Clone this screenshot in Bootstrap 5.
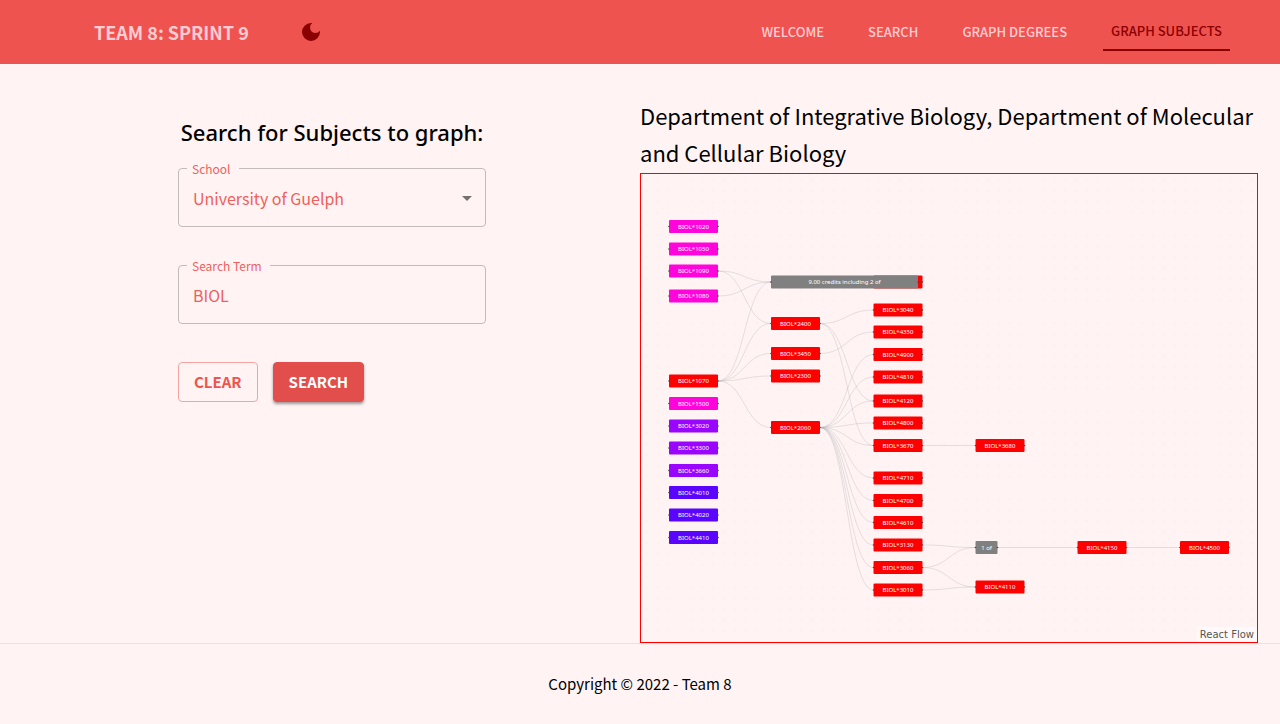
<!DOCTYPE html>
<html lang="en">
<head>
<meta charset="utf-8">
<meta name="viewport" content="width=device-width, initial-scale=1">
<title>Graph Subjects</title>
<link href="https://cdn.jsdelivr.net/npm/bootstrap@5.3.0/dist/css/bootstrap.min.css" rel="stylesheet">
<style>
  :root { --page: #fff4f3; --brand: #ef5350; --soft: #ffcdd2; --deep: #8b0000; }
  body { background: var(--page); color: #000; font-family: "Noto Sans CJK SC", "Noto Sans", sans-serif; }
  .top-bar { background: var(--brand); height: 64px; padding: 0 50px 0 94px; }
  .brand-name { color: var(--soft); font-size: 18px; line-height: 30px; font-weight: 700; }
  .theme-btn { width: 40px; height: 40px; color: var(--deep); margin-left: 42px; }
  .nav-list { gap: 28px; }
  .nav-item-link { color: var(--soft); font-size: 13px; line-height: 24px; font-weight: 500; padding: 6px 8px; }
  .nav-item-link.active { color: var(--deep); border-bottom: 2px solid var(--deep); }
  .search-form { width: 308px; padding-top: 50px; margin-left: 178px; }
  .form-title { font-family: "Noto Sans", sans-serif; font-size: 22px; line-height: 36px; font-weight: 500; margin-bottom: 18px; }
  .field { border: 1px solid #c4bbbb; border-radius: 4px; height: 59px; margin-bottom: 38px; }
  .field label { top: -10px; left: 8px; padding: 0 8px 0 5px; font-size: 12px; line-height: 20px; color: #ef5f5d; background: var(--page); }
  .field select, .field input { border: 0; outline: 0; background: transparent; appearance: none; color: #ef5f5d; font-size: 16px; padding: 0 14px; }
  .arrow { right: 6px; top: 17px; color: #757070; pointer-events: none; }
  .act-row { gap: 15px; }
  .act-btn { height: 40px; padding: 0 15px; font-size: 15px; line-height: 24px; font-weight: 700; border-radius: 4px; }
  .act-clear { border: 1px solid #f7a3a1; color: var(--brand); background: transparent; }
  .act-search { border: 1px solid #e24e4b; color: #fff; background: #e24e4b; box-shadow: 0 2px 3px rgba(0,0,0,.38); }
  .graph-side { padding-top: 33px; padding-right: 22px; }
  .graph-title { font-size: 22px; line-height: 37px; font-weight: 400; margin-bottom: 2px; }
  .flow-box { border: 1px solid #f00; }
  .flow-box text { font: 400 6px "Noto Sans", sans-serif; fill: #fff; text-anchor: middle; }
  .flow-credit { right: 0; bottom: 0; padding: 1px 3px; font: 10px/13px "DejaVu Sans", sans-serif; color: #555; background: rgba(255,255,255,.5); }
  .page-foot { border-top: 1px solid #eae3e3; font-size: 15px; line-height: 24px; padding: 28px 0; }
</style>
</head>
<body>
<header class="top-bar d-flex align-items-center">
  <a href="#" class="brand-name text-decoration-none">TEAM 8: SPRINT 9</a>
  <button type="button" class="theme-btn btn border-0 p-0 d-flex align-items-center justify-content-center" aria-label="Dark mode">
    <svg width="24" height="24" viewBox="0 0 24 24" fill="currentColor"><path d="M12 3a9 9 0 1 0 9 9c0-.46-.04-.92-.1-1.36a5.389 5.389 0 0 1-4.4 2.26 5.403 5.403 0 0 1-3.14-9.8c-.44-.06-.9-.1-1.36-.1z"/></svg>
  </button>
  <nav class="ms-auto d-flex">
    <ul class="nav-list list-unstyled d-flex align-items-center mb-0">
      <li><a href="#" class="nav-item-link d-block text-decoration-none">WELCOME</a></li>
      <li><a href="#" class="nav-item-link d-block text-decoration-none">SEARCH</a></li>
      <li><a href="#" class="nav-item-link d-block text-decoration-none">GRAPH DEGREES</a></li>
      <li><a href="#" class="nav-item-link active d-block text-decoration-none" aria-current="page">GRAPH SUBJECTS</a></li>
    </ul>
  </nav>
</header>
<main class="row g-0">
  <section class="col-6">
    <form class="search-form">
      <h1 class="form-title text-center text-nowrap">Search for Subjects to graph:</h1>
      <div class="field position-relative">
        <label class="position-absolute" for="school">School</label>
        <select id="school" class="w-100 h-100"><option>University of Guelph</option></select>
        <svg class="arrow position-absolute" width="24" height="24" viewBox="0 0 24 24" fill="currentColor"><path d="M7 10l5 5 5-5z"/></svg>
      </div>
      <div class="field position-relative">
        <label class="position-absolute" for="term">Search Term</label>
        <input id="term" type="text" class="w-100 h-100" value="BIOL">
      </div>
      <div class="act-row d-flex">
        <button type="button" class="act-btn act-clear">CLEAR</button>
        <button type="button" class="act-btn act-search">SEARCH</button>
      </div>
    </form>
  </section>
  <section class="graph-side col-6">
    <h2 class="graph-title">Department of Integrative Biology, Department of Molecular and Cellular Biology</h2>
    <div class="flow-box position-relative">
      <svg id="flow" class="d-block w-100" viewBox="0 0 616 468" role="img" aria-label="Subject graph">
        <defs><pattern id="dots" width="11" height="11" patternUnits="userSpaceOnUse"><circle cx="6" cy="6" r=".4" fill="#d9cccc"/></pattern></defs>
        <rect width="616" height="468" fill="url(#dots)"/>
      </svg>
      <a href="#" class="flow-credit position-absolute text-decoration-none">React Flow</a>
    </div>
  </section>
</main>
<footer class="page-foot text-center">Copyright © 2022 - Team 8</footer>
<script src="https://cdn.jsdelivr.net/npm/bootstrap@5.3.0/dist/js/bootstrap.bundle.min.js"></script>
<script>
  const pink = '#ff05dc', violet = '#9905ff', blue = '#5a05ff', red = '#ff0000', grey = '#808080';
  // id: [left, centre, colour, width, label]
  const nodes = {};
  const column = (x, list) => list.forEach(([id, y, c = red]) => nodes[id] = { x, y, c, w: 49, t: 'BIOL*' + id });
  column(28, [[1020,52.5,pink],[1050,75,pink],[1090,97,pink],[1080,122,pink],[1070,207],[1500,229.5,pink],
    [3020,252,violet],[3300,274,violet],[3660,296.5,violet],[4010,318.5,blue],[4020,341,blue],[4410,363.5,blue]]);
  column(130, [[2400,149.5],[3450,179.5],[2300,202],[2060,253.5]]);
  column(232.5, [[3040,136],[4350,158],[4900,180.5],[4810,203],[4120,227],[4800,249],[3670,271.5],[4710,304],
    [4700,326.5],[4610,348.5],[3130,371],[3060,393.5],[3010,416]]);
  column(334.5, [[3680,271.5],[4110,413]]);
  column(436.5, [[4150,373.5]]);
  column(539, [[4500,373.5]]);
  nodes.under = { x: 232.5, y: 108, c: red, w: 49, t: '' };
  nodes.credits = { x: 130, y: 108, c: grey, w: 147, t: '9.00 credits including 2 of' };
  nodes.oneOf = { x: 334.5, y: 373.5, c: grey, w: 22, t: '1 of' };
  const edges = [[1090,'credits'],[1090,2400],[1080,'credits'],[1070,'credits'],[1070,2400],[1070,3450],[1070,2300],[1070,2060],
    [2400,3040],[2400,4120],[2400,3670],[3450,4350],[2060,4900],[2060,4810],[2060,4120],[2060,4800],[2060,3670],[2060,4710],
    [2060,4700],[2060,4610],[2060,3130],[2060,3060],[2060,3010],[3670,3680],[3130,'oneOf'],[3060,'oneOf'],[3060,4110],
    [3010,4110],['oneOf',4150],[4150,4500]];
  const flow = document.getElementById('flow');
  const add = (tag, attrs, text) => {
    const el = document.createElementNS('http://www.w3.org/2000/svg', tag);
    for (const k in attrs) el.setAttribute(k, attrs[k]);
    if (text) el.textContent = text;
    flow.appendChild(el);
  };
  for (const [from, to] of edges) {
    const a = nodes[from], b = nodes[to], x1 = a.x + a.w, mid = (x1 + b.x) / 2;
    add('path', { d: `M${x1} ${a.y}C${mid} ${a.y} ${mid} ${b.y} ${b.x} ${b.y}`, fill: 'none', stroke: '#b1b1b7', 'stroke-width': .35 });
  }
  const order = ['under', ...Object.keys(nodes).filter(k => k !== 'under')];
  for (const key of order) {
    const n = nodes[key];
    add('rect', { x: n.x, y: n.y - 6.5, width: n.w, height: 13, rx: 1, fill: n.c });
    for (const hx of [n.x, n.x + n.w]) add('circle', { cx: hx, cy: n.y, r: .8, fill: '#444' });
    if (n.t) add('text', { x: n.x + n.w / 2, y: n.y + 2 }, n.t);
  }
</script>
</body>
</html>
